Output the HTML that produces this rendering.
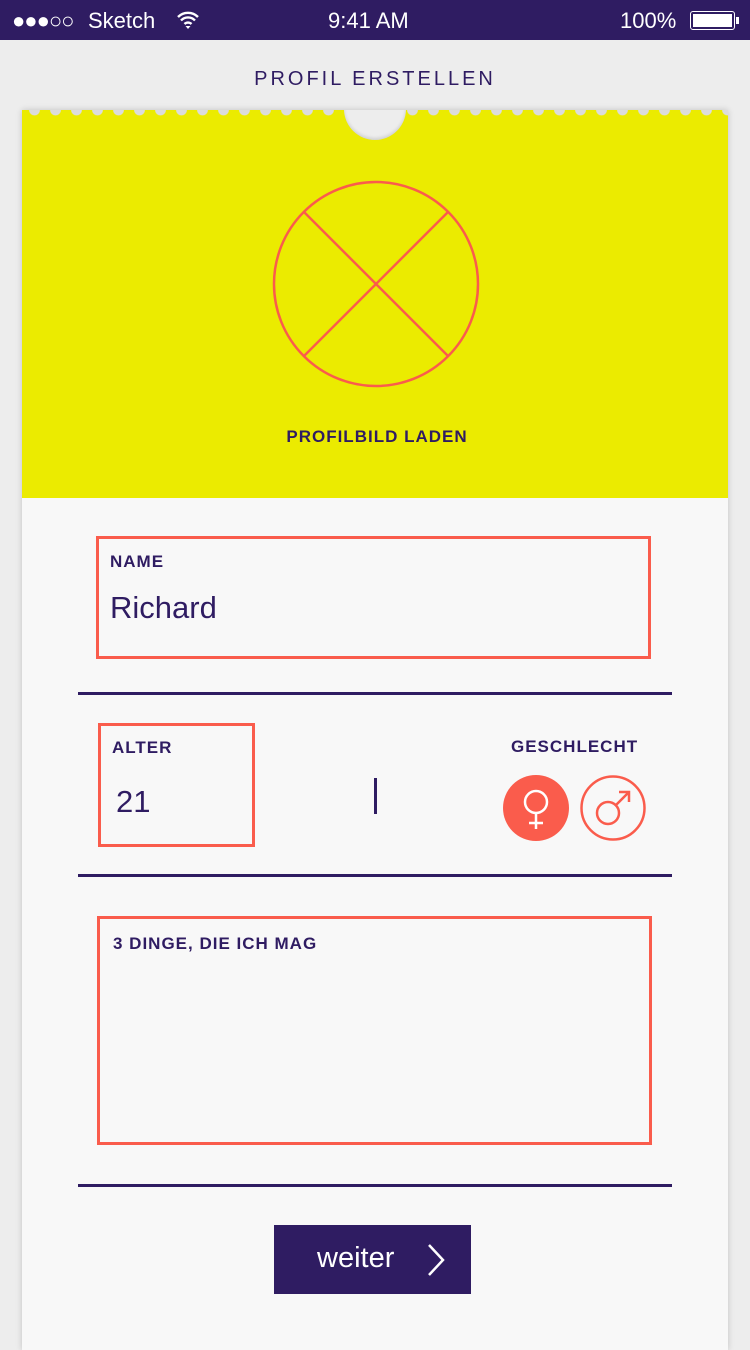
<!DOCTYPE html>
<html><head><meta charset="utf-8"><style>
*{margin:0;padding:0;box-sizing:border-box}
body{width:750px;height:1334px;background:#ededed;font-family:"Liberation Sans",sans-serif;position:relative;overflow:hidden;color:#2f1c62}
.sb{position:absolute;left:0;top:0;width:750px;height:40px;background:#2f1c62;color:#fff;font-size:22px}
.sb span{position:absolute;top:8px}
.card{position:absolute;left:22px;top:110px;width:706px;height:1240px;background:#f8f8f8;box-shadow:0 0 6px rgba(0,0,0,.18)}
.yel{position:absolute;left:0;top:0;width:706px;height:388px;background:#ebeb00;overflow:hidden}
.scal{position:absolute;left:2px;top:0;width:706px;height:8px;background:radial-gradient(circle at 50% 0,#dcdcdc 5px,transparent 5.8px) 0 0/21px 8px repeat-x}
.notch{position:absolute;left:322px;top:-32px;width:62px;height:62px;border-radius:50%;background:#ededed;box-shadow:inset 0 -2px 3px rgba(0,0,0,.12)}
.lbl{font-weight:bold;font-size:17px;letter-spacing:1px;position:absolute}
.box{position:absolute;border:3px solid #fa5c4c}
.line{position:absolute;left:56px;width:594px;height:3px;background:#2f1c62}
</style></head><body>
<div class="sb"><span style="left:12px;letter-spacing:-1px">●●●○○</span><span style="left:88px">Sketch</span>
<svg style="position:absolute;left:176px;top:10px" width="24" height="20" viewBox="0 0 24 20"><path d="M2 7a14 14 0 0 1 20 0M5 10.5a9.5 9.5 0 0 1 14 0M8.5 14a5 5 0 0 1 7 0" stroke="#fff" stroke-width="2.4" fill="none"/><path d="M12 19l-2.5-3h5z" fill="#fff"/></svg>
<span style="left:328px">9:41 AM</span><span style="left:620px">100%</span>
<div style="position:absolute;left:690px;top:11px;width:45px;height:19px;border:1.5px solid #fff;border-radius:3px;padding:2px"><div style="background:#fff;width:100%;height:100%"></div></div>
<div style="position:absolute;left:736px;top:17px;width:3px;height:7px;background:#fff"></div></div>
<div style="position:absolute;left:0;width:750px;top:68px;text-align:center;font-size:20px;letter-spacing:3px">PROFIL ERSTELLEN</div>
<div class="card">
<div class="yel"><div class="scal"></div><div class="notch"></div>
<svg style="position:absolute;left:250px;top:70px" width="208" height="208" viewBox="0 0 208 208"><circle cx="104" cy="104" r="102" fill="none" stroke="#fa5c4c" stroke-width="2.5"/><path d="M32 32L176 176M176 32L32 176" stroke="#fa5c4c" stroke-width="2.5"/></svg>
<div class="lbl" style="left:0;width:710px;text-align:center;top:317px">PROFILBILD LADEN</div>
</div>
<div class="box" style="left:74px;top:426px;width:555px;height:123px"></div>
<div class="lbl" style="left:88px;top:442px">NAME</div>
<div style="position:absolute;left:88px;top:480px;font-size:31px">Richard</div>
<div class="line" style="top:582px"></div>
<div class="box" style="left:76px;top:613px;width:157px;height:124px"></div>
<div class="lbl" style="left:90px;top:628px">ALTER</div>
<div style="position:absolute;left:94px;top:674px;font-size:31px">21</div>
<div style="position:absolute;left:352px;top:668px;width:3px;height:36px;background:#2f1c62"></div>
<div class="lbl" style="left:489px;top:627px">GESCHLECHT</div>
<svg style="position:absolute;left:480px;top:664px" width="148" height="68" viewBox="0 0 148 68"><circle cx="34" cy="34" r="33" fill="#fa5c4c"/><circle cx="34" cy="28" r="11" fill="none" stroke="#fff" stroke-width="2.5"/><path d="M34 39v16M27 49h14" stroke="#fff" stroke-width="2.5"/><circle cx="111" cy="34" r="31.5" fill="none" stroke="#fa5c4c" stroke-width="2.5"/><circle cx="106" cy="39" r="11" fill="none" stroke="#fa5c4c" stroke-width="2.5"/><path d="M114 31l13-13M117 18h10v10" fill="none" stroke="#fa5c4c" stroke-width="2.5"/></svg>
<div class="line" style="top:764px"></div>
<div class="box" style="left:75px;top:806px;width:555px;height:229px"></div>
<div class="lbl" style="left:91px;top:824px">3 DINGE, DIE ICH MAG</div>
<div class="line" style="top:1074px"></div>
<div style="position:absolute;left:252px;top:1115px;width:197px;height:69px;background:#2f1c62;color:#fff;font-size:29px">
<span style="position:absolute;left:43px;top:17px">weiter</span>
<svg style="position:absolute;left:152px;top:18px" width="20" height="34" viewBox="0 0 20 34"><path d="M3 2l14 15L3 32" fill="none" stroke="#fff" stroke-width="2.5"/></svg></div>
</div>
</body></html>
